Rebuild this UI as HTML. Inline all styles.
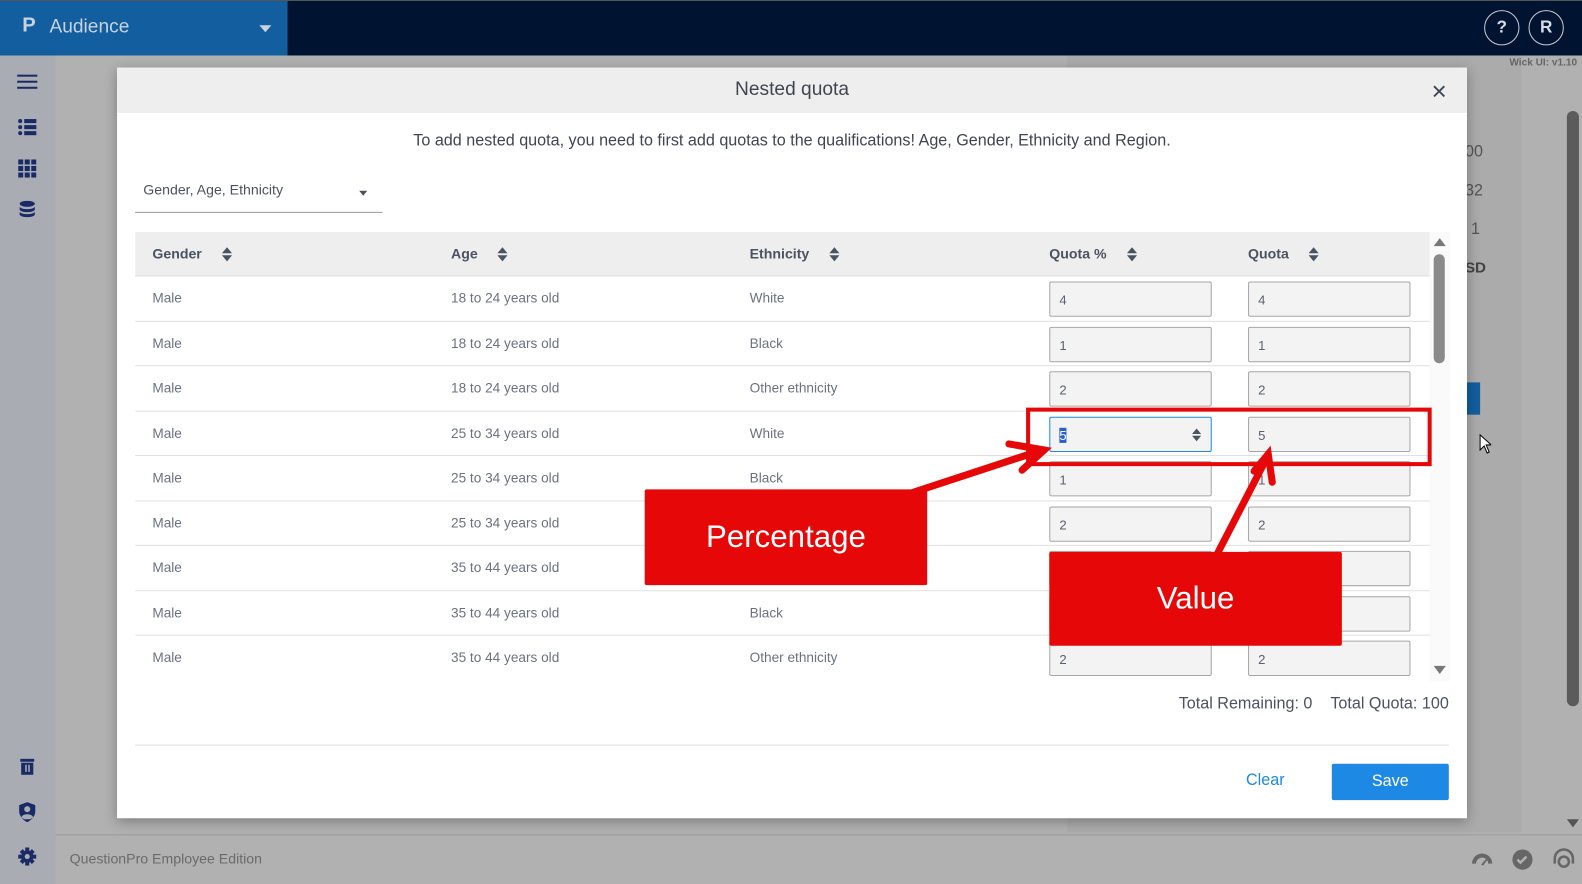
<!DOCTYPE html>
<html><head><meta charset="utf-8"><style>
*{margin:0;padding:0;box-sizing:border-box}
html,body{width:1582px;height:884px;overflow:hidden;background:#b0b0b0}
#w{position:absolute;left:0;top:0;width:1568px;height:876px;transform:scale(1.00893);transform-origin:0 0;font-family:"Liberation Sans",sans-serif;color:#4a5361;background:#b1b1b1}
.a{position:absolute}
.top{left:0;top:0;width:1568px;height:55px;background:#001330;border-top:1px solid #555}
.brand{left:0;top:1px;width:285px;height:54px;background:#125e9f;color:#c7d3e0;font-size:19px}
.side{left:0;top:55px;width:55px;height:821px;background:#a9acb2}
.circ{width:35px;height:35px;border:1.5px solid #c8ccd4;border-radius:50%;color:#d6dbe3;font-weight:bold;font-size:17px;text-align:center;line-height:32px}
.modal{left:116px;top:67px;width:1338px;height:744px;background:#fff;box-shadow:0 3px 12px rgba(0,0,0,.3)}
.mh{left:0;top:0;width:1338px;height:45px;background:#eeeeee;text-align:center;font-size:19px;line-height:44px;color:#3f4652}
.row{left:18px;width:1283px;height:44.5px;border-bottom:1px solid #e0e0e0;font-size:13.5px;color:#6a7280}
.row span{position:absolute;top:14px}
.inp{position:absolute;width:161px;height:35px;background:#f3f3f3;border:1px solid #a6a6a6;border-radius:2px;top:5px;font-size:13px;padding:10px 9px;color:#5a6270}
.th{font-weight:bold;font-size:14px;color:#4a5361;position:absolute;top:13px}
.sort{display:inline-block;margin-left:20px;vertical-align:middle;width:10px;height:14px;position:relative}
.sort:before{content:"";position:absolute;left:0;top:0;border:5px solid transparent;border-bottom:6px solid #4a5361;border-top:0}
.sort:after{content:"";position:absolute;left:0;top:8px;border:5px solid transparent;border-top:6px solid #4a5361;border-bottom:0}
.red{background:#e60808;color:#fff;font-size:31px;text-align:center}
</style></head><body><div id="w">
<div class="a top"></div>
<div class="a brand"><span class="a" style="left:22px;top:13px;font-weight:bold;font-size:20px">P</span><span class="a" style="left:49px;top:15px">Audience</span><span class="a" style="left:257px;top:24px;border:6px solid transparent;border-top:7px solid #c7d3e0"></span></div>
<div class="a circ" style="left:1471px;top:10px">?</div>
<div class="a circ" style="left:1515px;top:10px">R</div>
<div class="a side"></div>
<div class="a" style="left:1058px;top:55px;width:450px;height:770px;background:#ababab"></div>
<div class="a" style="left:1496px;top:57px;font-size:10px;color:#666;font-weight:bold">Wick UI: v1.10</div>
<div class="a" style="left:1452px;top:142px;font-size:16px;color:#555">00</div>
<div class="a" style="left:1452px;top:181px;font-size:16px;color:#555">32</div>
<div class="a" style="left:1458px;top:219px;font-size:16px;color:#555">1</div>
<div class="a" style="left:1452px;top:257px;font-size:15px;color:#444;font-weight:bold">SD</div>
<div class="a" style="left:1454px;top:379px;width:13px;height:32px;background:#125e9f"></div>
<div class="a" style="left:1553px;top:110px;width:12px;height:590px;background:#5b5b5b;border-radius:6px"></div>
<div class="a" style="left:1553px;top:812px;border:6px solid transparent;border-top:8px solid #555;border-bottom:0"></div>
<div class="a" style="left:55px;top:827px;width:1513px;height:1px;background:#999"></div>
<div class="a" style="left:69px;top:843px;font-size:14px;color:#6a6a6a">QuestionPro Employee Edition</div>
<div class="a" style="left:17px;top:74px;width:20px;height:2px;background:#1a2a66;box-shadow:0 6px 0 #1a2a66,0 12px 0 #1a2a66"></div>
<svg class="a" style="left:17px;top:117px" width="20" height="20" fill="#1a2a66"><circle cx="3" cy="3" r="2"/><circle cx="3" cy="9" r="2"/><circle cx="3" cy="15" r="2"/><rect x="7" y="1" width="12" height="4"/><rect x="7" y="7" width="12" height="4"/><rect x="7" y="13" width="12" height="4"/></svg>
<svg class="a" style="left:18px;top:158px" width="18" height="18" fill="#1a2a66"><rect x="0" y="0" width="5" height="5"/><rect x="6.5" y="0" width="5" height="5"/><rect x="13" y="0" width="5" height="5"/><rect x="0" y="6.5" width="5" height="5"/><rect x="6.5" y="6.5" width="5" height="5"/><rect x="13" y="6.5" width="5" height="5"/><rect x="0" y="13" width="5" height="5"/><rect x="6.5" y="13" width="5" height="5"/><rect x="13" y="13" width="5" height="5"/></svg>
<svg class="a" style="left:19px;top:199px" width="16" height="17" fill="#1a2a66"><ellipse cx="8" cy="3" rx="7.5" ry="3"/><path d="M0.5 6c2 3 13 3 15 0v3c-2 3-13 3-15 0z"/><path d="M0.5 11c2 3 13 3 15 0v3c-2 3-13 3-15 0z"/></svg>
<svg class="a" style="left:20px;top:752px" width="14" height="16" fill="#1a2a66"><rect x="0" y="0" width="14" height="3"/><path d="M1 4h12v12H1z"/><rect x="5" y="6" width="1.5" height="7" fill="#a9acb2"/><rect x="8" y="6" width="1.5" height="7" fill="#a9acb2"/></svg>
<svg class="a" style="left:18px;top:795px" width="18" height="20" fill="#1a2a66"><path d="M9 0L1 3v6c0 5 4 9 8 11 4-2 8-6 8-11V3z"/><circle cx="9" cy="7" r="3" fill="#a9acb2"/><path d="M3 15c2-4 10-4 12 0l-3 2H6z" fill="#a9acb2"/></svg>
<svg class="a" style="left:18px;top:840px" width="18" height="18" fill="#1a2a66"><circle cx="9" cy="9" r="6"/><g stroke="#1a2a66" stroke-width="4"><path d="M9 0v18M0 9h18M3 3l12 12M15 3L3 15"/></g><circle cx="9" cy="9" r="2.5" fill="#a9acb2"/></svg>
<svg class="a" style="left:1458px;top:842px" width="22" height="18" fill="#666"><path d="M1 14A10 10 0 0 1 21 14h-4A6 6 0 0 0 5 14z"/><path d="M10 15l6-7 1 1-5 7z"/></svg>
<svg class="a" style="left:1497px;top:840px" width="24" height="24"><circle cx="12" cy="12" r="10" fill="#666"/><path d="M7 12l3 3 6-6" stroke="#b1b1b1" stroke-width="2.5" fill="none"/></svg>
<svg class="a" style="left:1538px;top:840px" width="24" height="24" fill="none" stroke="#666" stroke-width="2.5"><path d="M3 16V11a9 9 0 0 1 18 0v5"/><circle cx="12" cy="14" r="5"/></svg>
<div class="a modal">
 <div class="a mh">Nested quota</div>
 <div class="a" style="right:20px;top:8px;font-size:26px;color:#3f4652">×</div>
 <div class="a" style="left:0;top:64px;width:1338px;text-align:center;font-size:16px;color:#3f4652">To add nested quota, you need to first add quotas to the qualifications! Age, Gender, Ethnicity and Region.</div>
 <div class="a" style="left:18px;top:113px;width:245px;height:31px;border-bottom:1px solid #999;font-size:14px;padding-left:8px;color:#4a5361">Gender, Age, Ethnicity<span class="a" style="left:222px;top:9px;border:4px solid transparent;border-top:5px solid #4a5361"></span></div>
 <div class="a" style="left:18px;top:163px;width:1283px;height:44px;background:#eeeeee;border-bottom:1px solid #ddd">
  <div class="th" style="left:17px">Gender<i class="sort"></i></div>
  <div class="th" style="left:313px">Age<i class="sort"></i></div>
  <div class="th" style="left:609px">Ethnicity<i class="sort"></i></div>
  <div class="th" style="left:906px">Quota %<i class="sort"></i></div>
  <div class="th" style="left:1103px">Quota<i class="sort"></i></div>
 </div>
 <div class="a" style="left:1301px;top:163px;width:20px;height:445px;background:#fafafa"></div>
 <div class="a" style="left:1305px;top:169px;border:6px solid transparent;border-bottom:8px solid #777;border-top:0"></div>
 <div class="a" style="left:1305px;top:185px;width:11px;height:108px;background:#8a8a8a;border-radius:6px"></div>
 <div class="a" style="left:1305px;top:593px;border:6px solid transparent;border-top:8px solid #777;border-bottom:0"></div>
 <div class="a row" style="top:207px"><span style="left:17px">Male</span><span style="left:313px">18 to 24 years old</span><span style="left:609px">White</span><div class="inp" style="left:906px">4</div><div class="inp" style="left:1103px">4</div></div>
 <div class="a row" style="top:251.5px"><span style="left:17px">Male</span><span style="left:313px">18 to 24 years old</span><span style="left:609px">Black</span><div class="inp" style="left:906px">1</div><div class="inp" style="left:1103px">1</div></div>
 <div class="a row" style="top:296px"><span style="left:17px">Male</span><span style="left:313px">18 to 24 years old</span><span style="left:609px">Other ethnicity</span><div class="inp" style="left:906px">2</div><div class="inp" style="left:1103px">2</div></div>
 <div class="a row" style="top:340.5px"><span style="left:17px">Male</span><span style="left:313px">25 to 34 years old</span><span style="left:609px">White</span><div class="inp" style="left:906px;border-color:#1e88e5"><b style="background:#2a5fd0;color:#fff;font-weight:normal">5</b><i class="sort" style="position:absolute;left:140px;top:10px;margin:0;transform:scale(.9)"></i></div><div class="inp" style="left:1103px">5</div></div>
 <div class="a row" style="top:385px"><span style="left:17px">Male</span><span style="left:313px">25 to 34 years old</span><span style="left:609px">Black</span><div class="inp" style="left:906px">1</div><div class="inp" style="left:1103px">1</div></div>
 <div class="a row" style="top:429.5px"><span style="left:17px">Male</span><span style="left:313px">25 to 34 years old</span><span style="left:609px">Other ethnicity</span><div class="inp" style="left:906px">2</div><div class="inp" style="left:1103px">2</div></div>
 <div class="a row" style="top:474px"><span style="left:17px">Male</span><span style="left:313px">35 to 44 years old</span><span style="left:609px">White</span><div class="inp" style="left:906px">4</div><div class="inp" style="left:1103px">4</div></div>
 <div class="a row" style="top:518.5px"><span style="left:17px">Male</span><span style="left:313px">35 to 44 years old</span><span style="left:609px">Black</span><div class="inp" style="left:906px">1</div><div class="inp" style="left:1103px">1</div></div>
 <div class="a row" style="top:563px;border:0"><span style="left:17px">Male</span><span style="left:313px">35 to 44 years old</span><span style="left:609px">Other ethnicity</span><div class="inp" style="left:906px">2</div><div class="inp" style="left:1103px">2</div></div>
 <div class="a" style="right:18px;top:622px;font-size:16px;color:#4a5361">Total Remaining: 0&nbsp;&nbsp;&nbsp;&nbsp;Total Quota: 100</div>
 <div class="a" style="left:18px;top:671px;width:1302px;height:1px;background:#ddd"></div>
 <div class="a" style="left:1119px;top:698px;font-size:16px;color:#1e88e5">Clear</div>
 <div class="a" style="left:1204px;top:690px;width:116px;height:36px;background:#1e88e5;border-radius:2px;color:#fff;font-size:16px;text-align:center;line-height:36px">Save</div>
</div>
<div class="a" style="left:1017px;top:404px;width:402px;height:58px;border:4px solid #e60808"></div>
<svg class="a" style="left:0;top:0" width="1568" height="876">
 <g stroke="#e60808" stroke-width="7" fill="none" stroke-linecap="round">
  <path d="M905 488L1030 447"/><path d="M1000 440L1035 446L1013 466"/>
  <path d="M1207 548L1255 455"/><path d="M1243 467L1257 450L1261 478"/>
 </g>
</svg>
<div class="a red" style="left:639px;top:485px;width:280px;height:95px;line-height:93px;border-radius:2px">Percentage</div>
<div class="a red" style="left:1040px;top:547px;width:290px;height:93px;line-height:91px;border-radius:2px">Value</div>
<svg class="a" style="left:1466px;top:430px" width="12" height="20"><path d="M1 1v15l4-4 3 7 2-1-3-7h5z" fill="#fff" stroke="#000"/></svg>
</div></body></html>
